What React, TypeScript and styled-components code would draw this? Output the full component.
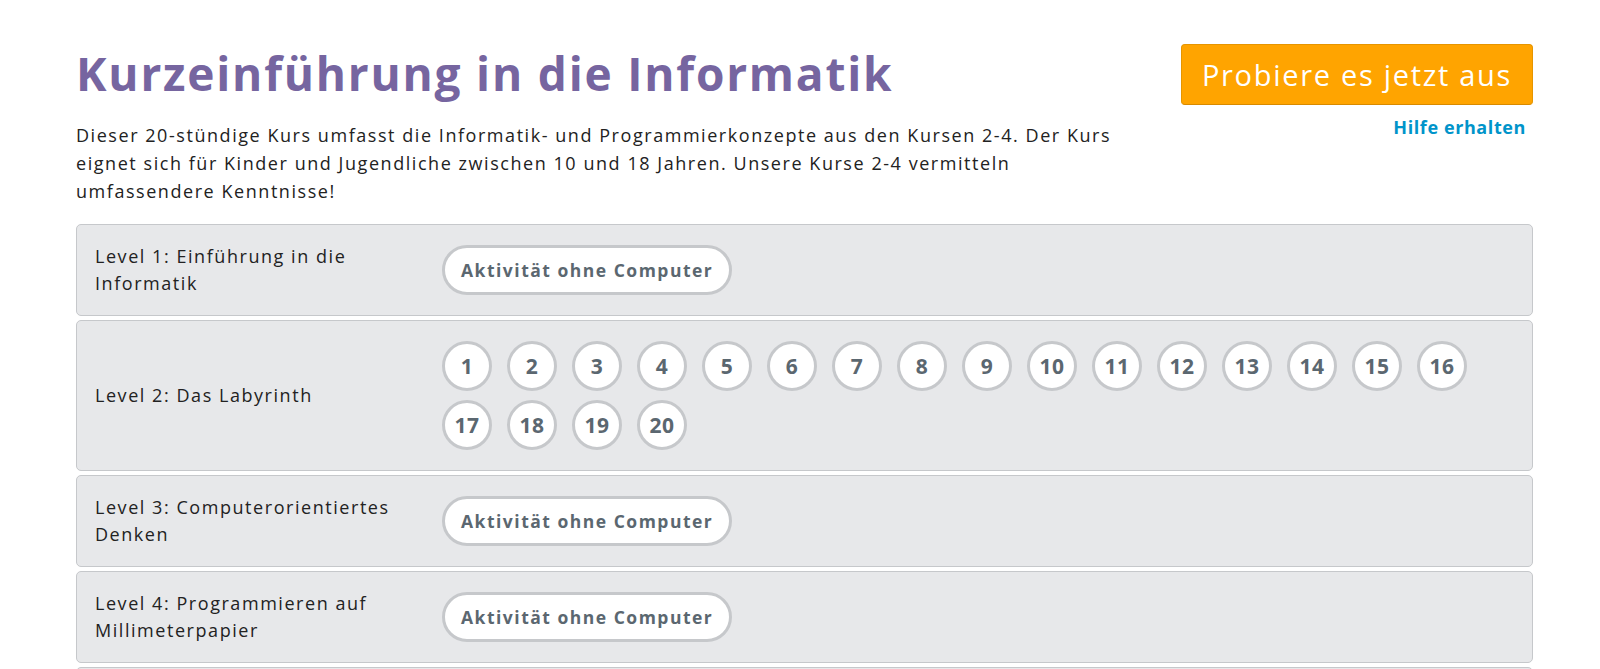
import React from "react";
import styled, { createGlobalStyle } from "styled-components";

const GlobalStyle = createGlobalStyle`
  body {
    margin: 0;
    background: #ffffff;
    font-family: "Open Sans", "Liberation Sans", sans-serif;
    color: #222222;
  }
`;

const Page = styled.div`
  padding: 40px 67px 0 76px;
`;

const Header = styled.div`
  display: flex;
  justify-content: space-between;
  align-items: flex-start;
`;

const Intro = styled.div`
  max-width: 1070px;
`;

const Title = styled.h1`
  margin: 0;
  font-size: 46px;
  line-height: 66px;
  font-weight: 700;
  color: #7665a0;
  letter-spacing: 1.8px;
`;

const Description = styled.p`
  margin: 15px 0 0;
  font-size: 18px;
  line-height: 28px;
  color: #222222;
  letter-spacing: 1.55px;
`;

const Actions = styled.div`
  display: flex;
  flex-direction: column;
  align-items: flex-end;
  padding-top: 4px;
`;

const TryButton = styled.button`
  width: 352px;
  height: 61px;
  background: #ffa400;
  border: 1px solid #e69500;
  border-bottom-color: #d88a00;
  border-radius: 4px;
  color: #ffffff;
  font-family: "Open Sans", "Liberation Sans", sans-serif;
  font-size: 29px;
  font-weight: 400;
  letter-spacing: 1.7px;
  cursor: pointer;
`;

const HelpLink = styled.a`
  margin-top: 10px;
  margin-right: 7px;
  font-size: 18px;
  font-weight: 700;
  letter-spacing: 0.6px;
  color: #0094ca;
  text-decoration: none;
`;

const Levels = styled.div`
  display: flex;
  flex-direction: column;
  gap: 4px;
  margin-top: 19px;
`;

const LevelCard = styled.div`
  display: flex;
  align-items: center;
  background: #e7e8ea;
  border: 1px solid #c6c8cb;
  border-radius: 5px;
  padding: 18px 17px 18px 18px;
`;

const LevelName = styled.div`
  width: 330px;
  flex-shrink: 0;
  margin-right: 17px;
  font-size: 18px;
  line-height: 27px;
  letter-spacing: 1.55px;
  color: #222222;
`;

const Steps = styled.div`
  display: flex;
  flex-wrap: wrap;
  gap: 9px 15px;
  padding: 2px 0;
`;

const Bubble = styled.div<{ $wide?: boolean }>`
  box-sizing: border-box;
  height: 50px;
  min-width: 50px;
  padding: ${(p) => (p.$wide ? "0 16px" : "0")};
  display: flex;
  align-items: center;
  justify-content: center;
  background: #ffffff;
  border: 3px solid #c6c8cb;
  border-radius: 25px;
  font-size: ${(p) => (p.$wide ? "17.5px" : "21px")};
  letter-spacing: ${(p) => (p.$wide ? "1.5px" : "0.5px")};
  font-weight: 700;
  color: #5b6770;
`;

type Level = { name: string; unplugged?: boolean; count?: number };

const levels: Level[] = [
  { name: "Level 1: Einführung in die Informatik", unplugged: true },
  { name: "Level 2: Das Labyrinth", count: 20 },
  { name: "Level 3: Computerorientiertes Denken", unplugged: true },
  { name: "Level 4: Programmieren auf Millimeterpapier", unplugged: true },
  { name: "Level 5: Der Künstler", count: 10 },
];

export default function App() {
  return (
    <>
      <GlobalStyle />
      <Page>
        <Header>
          <Intro>
            <Title>Kurzeinführung in die Informatik</Title>
            <Description>
              Dieser 20-stündige Kurs umfasst die Informatik- und
              Programmierkonzepte aus den Kursen 2-4. Der Kurs eignet sich für
              Kinder und Jugendliche zwischen 10 und 18 Jahren. Unsere Kurse 2-4
              vermitteln umfassendere Kenntnisse!
            </Description>
          </Intro>
          <Actions>
            <TryButton>Probiere es jetzt aus</TryButton>
            <HelpLink href="#">Hilfe erhalten</HelpLink>
          </Actions>
        </Header>
        <Levels>
          {levels.map((level) => (
            <LevelCard key={level.name}>
              <LevelName>{level.name}</LevelName>
              <Steps>
                {level.unplugged ? (
                  <Bubble $wide>Aktivität ohne Computer</Bubble>
                ) : (
                  Array.from({ length: level.count ?? 0 }, (_, i) => (
                    <Bubble key={i}>{i + 1}</Bubble>
                  ))
                )}
              </Steps>
            </LevelCard>
          ))}
        </Levels>
      </Page>
    </>
  );
}
